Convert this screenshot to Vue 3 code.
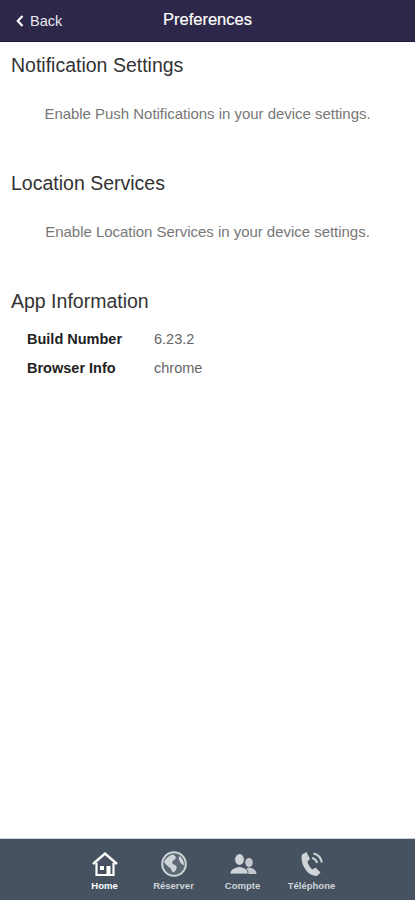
<script setup>
const tabs = [
  { label: 'Home', icon: 'home', active: true },
  { label: 'Réserver', icon: 'globe' },
  { label: 'Compte', icon: 'people' },
  { label: 'Téléphone', icon: 'phone' }
]
</script>

<template>
  <div class="page">
    <header class="topbar">
      <div class="back">
        <svg width="8" height="12" viewBox="0 0 8 12"><path d="M6.5 1 L1.8 6 L6.5 11" fill="none" stroke="#fff" stroke-width="2.2" /></svg>
        <span>Back</span>
      </div>
      <div class="title">Preferences</div>
    </header>

    <main class="content">
      <section class="section first">
        <h2>Notification Settings</h2>
        <p class="note">Enable Push Notifications in your device settings.</p>
      </section>
      <section class="section">
        <h2>Location Services</h2>
        <p class="note">Enable Location Services in your device settings.</p>
      </section>
      <section class="section">
        <h2>App Information</h2>
        <div class="info">
          <div class="row"><b>Build Number</b><span>6.23.2</span></div>
          <div class="row"><b>Browser Info</b><span>chrome</span></div>
        </div>
      </section>
    </main>

    <nav class="tabbar">
      <div v-for="tab in tabs" :key="tab.label" class="tab" :class="{ active: tab.active }">
        <svg v-if="tab.icon === 'home'" width="28" height="26" viewBox="0 0 28 26">
          <path d="M2 13 L14 2.5 L26 13" fill="none" stroke="currentColor" stroke-width="2.4" />
          <path d="M5.5 12 V24 H22.5 V12" fill="none" stroke="currentColor" stroke-width="2.2" />
          <rect x="9" y="15" width="4" height="4" fill="currentColor" />
          <rect x="15.5" y="15" width="4" height="9" fill="currentColor" />
        </svg>
        <svg v-else-if="tab.icon === 'globe'" width="28" height="26" viewBox="0 0 28 26">
          <circle cx="14" cy="13" r="11.8" fill="#5d6975" stroke="currentColor" stroke-width="2" />
          <path d="M4 11 C6 7 9 5 12 3.5 C15 4 17 6 15 8.5 C12 10 11 12 14 13.5 C17 14.5 17.5 17 15.5 19.5 C14 22 12 21.5 11.5 19 C10.5 16 6.5 15 4 11 Z" fill="currentColor" />
          <path d="M19.5 5 C22 7 24 10 24 14 C22 14 20.5 12 19.5 10 C18.5 8 18.5 6 19.5 5 Z" fill="currentColor" />
        </svg>
        <svg v-else-if="tab.icon === 'people'" width="28" height="26" viewBox="0 0 28 26">
          <ellipse cx="20" cy="11.5" rx="3.8" ry="4.6" fill="currentColor" opacity="0.9" />
          <path d="M16 23 C16 19 17 17 20 16.5 C24 17 27.5 19 27.5 23 Z" fill="currentColor" opacity="0.9" />
          <ellipse cx="10.5" cy="8.5" rx="4.8" ry="5.8" fill="currentColor" stroke="#46525f" stroke-width="0.8" />
          <path d="M1 23 C1 18.5 5 16.5 10.5 15.5 C16 16.5 19 18.5 19 23 Z" fill="currentColor" stroke="#46525f" stroke-width="0.8" />
        </svg>
        <svg v-else width="28" height="26" viewBox="0 0 28 26">
          <path d="M4 3.5 L8.5 1 L12 8 L9.5 10.5 C10 13.5 12 17 14.5 18.5 L17.5 16.5 L22.5 21.5 L19 25 C10 25.5 1.5 13 4 3.5 Z" fill="currentColor" />
          <path d="M14 7 C16.5 7.5 18.5 9.5 19 12 M15.5 2.5 C20 3.5 23 7 23.8 11.5" fill="none" stroke="currentColor" stroke-width="2" />
        </svg>
        <span>{{ tab.label }}</span>
      </div>
    </nav>
  </div>
</template>

<style>
body {
  margin: 0;
  background: #fff;
}
</style>

<style scoped>
.page {
  height: 900px;
  display: flex;
  flex-direction: column;
  font-family: "Liberation Sans", Arial, sans-serif;
  overflow: hidden;
}
.topbar {
  height: 41px;
  background: #2d2749;
  border-bottom: 1px solid #1c1840;
  display: flex;
  align-items: center;
  justify-content: center;
  position: relative;
  color: #fff;
}
.back {
  position: absolute;
  left: 16px;
  top: 13px;
  display: flex;
  align-items: center;
  gap: 6px;
  font-size: 14.5px;
  color: #e8e8ee;
}
.title {
  font-size: 16.5px;
  margin-top: -2px;
  -webkit-text-stroke: 0.2px #fff;
}
.content {
  flex: 1;
}
.section {
  padding: 0 11px;
  margin-top: 50px;
}
.section.first {
  margin-top: 12px;
}
h2 {
  margin: 0;
  font-size: 19.5px;
  line-height: 22px;
  font-weight: 400;
  color: #333;
}
.note {
  margin: 30px 0 0;
  font-size: 15px;
  letter-spacing: -0.03px;
  line-height: 16px;
  color: #777;
  text-align: center;
}
.info {
  margin-top: 19px;
  padding-left: 16px;
}
.row {
  display: flex;
  height: 29px;
  font-size: 14.5px;
  line-height: 17px;
}
.row b {
  width: 127px;
  color: #222;
}
.row span {
  color: #666;
}
.tabbar {
  height: 62px;
  background: #46525f;
  border-top: 1px solid #c9ced3;
  box-sizing: border-box;
  display: flex;
  justify-content: center;
  padding-top: 12px;
  padding-left: 1px;
}
.tab {
  width: 69px;
  display: flex;
  flex-direction: column;
  align-items: center;
  color: #cfd4d9;
  font-size: 9.5px;
  font-weight: 700;
  gap: 3px;
}
.tab.active {
  color: #fff;
}
</style>
